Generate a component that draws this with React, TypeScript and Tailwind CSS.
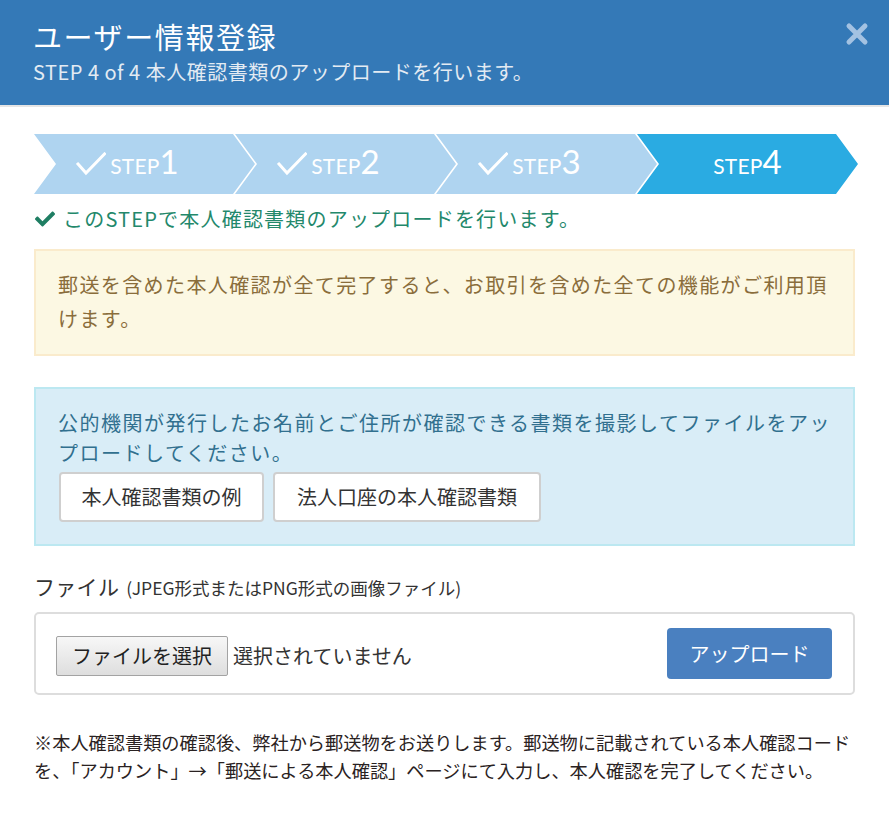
import React from "react";
import { FaCheck } from "react-icons/fa";

const steps = [
  { n: "1", done: true },
  { n: "2", done: true },
  { n: "3", done: true },
  { n: "4", done: false },
];

function StepCheck() {
  return (
    <svg
      className="absolute right-full mr-[4px] top-[7px]"
      width="30"
      height="24"
      viewBox="0 0 30 24"
      fill="none"
    >
      <polyline
        points="2,12 10,21 28.5,2"
        stroke="white"
        strokeWidth="3"
        strokeLinecap="square"
        strokeLinejoin="miter"
      />
    </svg>
  );
}

export default function App() {
  return (
    <div className="w-[889px] h-[833px] bg-white font-['Noto_Sans_CJK_JP',sans-serif] text-[#333]">
      {/* Header */}
      <header className="relative h-[107px] bg-[#3479b7] border-b-2 border-[#e5e5e5] px-[33px] pt-[15px]">
        <h1 className="text-white text-[29px] leading-[42px] tracking-[1.6px]">ユーザー情報登録</h1>
        <p className="text-[#e3ebf3] text-[20px] leading-[28px] mt-[1px] tracking-[0.5px]">
          STEP 4 of 4 本人確認書類のアップロードを行います。
        </p>
        <svg className="absolute right-[20px] top-[22px]" width="24" height="24" viewBox="0 0 24 24">
          <path d="M4 4 L20 20 M20 4 L4 20" stroke="#a3c2e2" strokeWidth="5" strokeLinecap="round" />
        </svg>
      </header>

      <div className="px-[34px] pt-[27px]">
        {/* Steps */}
        <div className="flex h-[60px]">
          {steps.map((s, i) => (
            <div
              key={s.n}
              className={
                "w-[221px] shrink-0 h-full flex items-center justify-center pb-[6px] [clip-path:polygon(0_0,calc(100%-22px)_0,100%_50%,calc(100%-22px)_100%,0_100%,22px_50%)] " +
                (i > 0 ? "ml-[-20px] " : "") +
                (s.done ? "bg-[#afd4f0]" : "bg-[#2aabe2]")
              }
            >
              <span className="relative flex items-baseline text-white font-['Lato',sans-serif]">
                {s.done && <StepCheck />}
                <span className="text-[21px] leading-none tracking-[0.2px]">STEP</span>
                <span className="text-[33px] leading-none">{s.n}</span>
              </span>
            </div>
          ))}
        </div>

        {/* Green message */}
        <div className="flex items-center mt-[10px] h-[30px] text-[#23886b]">
          <FaCheck className="w-[20px] h-[20px] ml-[1px] mr-[8px] text-[#1f7e63]" />
          <span className="text-[20px] leading-[30px] tracking-[1.2px]">
            このSTEPで本人確認書類のアップロードを行います。
          </span>
        </div>

        {/* Warning */}
        <div className="mt-[15px] border-2 border-[#faebcc] bg-[#fcf8e3] text-[#8a6d3b] px-[22px] pt-[17px] pb-[18px] text-[20px] leading-[34px] tracking-[1.4px]">
          郵送を含めた本人確認が全て完了すると、お取引を含めた全ての機能がご利用頂
          <br />
          けます。
        </div>

        {/* Info */}
        <div className="mt-[31px] border-2 border-[#bce8f1] bg-[#d9edf7] px-[22px] pt-[19px] pb-[22px]">
          <p className="text-[#31708f] text-[20px] leading-[30px] tracking-[1.5px]">
            公的機関が発行したお名前とご住所が確認できる書類を撮影してファイルをアッ
            <br />
            プロードしてください。
          </p>
          <div className="flex gap-[9px] mt-[4px] ml-[1px]">
            <button className="w-[205px] h-[50px] bg-white border-2 border-[#cfcfcf] rounded-[4px] text-[20px] text-[#333]">
              本人確認書類の例
            </button>
            <button className="w-[268px] h-[50px] bg-white border-2 border-[#cfcfcf] rounded-[4px] text-[20px] text-[#333]">
              法人口座の本人確認書類
            </button>
          </div>
        </div>

        {/* File label */}
        <div className="mt-[25px] h-[30px] flex items-baseline">
          <span className="text-[21px] leading-[30px] tracking-[0.3px]">ファイル</span>
          <span className="text-[17.5px] leading-[30px] ml-[7px]">
            (JPEG形式またはPNG形式の画像ファイル)
          </span>
        </div>

        {/* File box */}
        <div className="mt-[11px] h-[83px] border-2 border-[#dddddd] rounded-[5px] flex items-center pl-[20px] pr-[21px]">
          <div className="w-[172px] h-[40px] flex items-center justify-center border border-[#a3a3a3] rounded-[2px] bg-gradient-to-b from-[#f7f7f7] to-[#dedede] text-[20px] text-[#222] mt-[4px]">
            ファイルを選択
          </div>
          <span className="ml-[5px] text-[20px] text-[#333] mt-[4px]">選択されていません</span>
          <button className="ml-auto w-[165px] h-[51px] rounded-[4px] bg-[#4a80c0] text-white text-[20px]">
            アップロード
          </button>
        </div>

        {/* Footnote */}
        <p className="mt-[33px] text-[18.2px] leading-[28px] text-[#2a2222]">
          ※本人確認書類の確認後、弊社から郵送物をお送りします。郵送物に記載されている本人確認コード
          <br />
          を、「アカウント」→「郵送による本人確認」ページにて入力し、本人確認を完了してください。
        </p>
      </div>
    </div>
  );
}
